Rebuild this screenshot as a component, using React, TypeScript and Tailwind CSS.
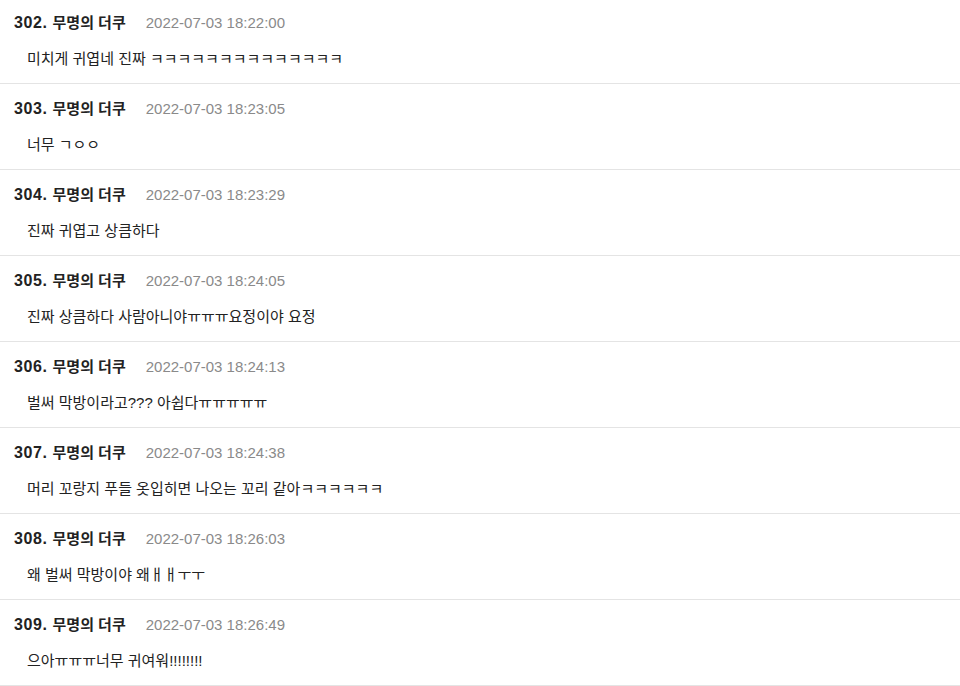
const comments = [
  { no: 302, at: '2022-07-03 18:22:00', text: '미치게 귀엽네 진짜 ㅋㅋㅋㅋㅋㅋㅋㅋㅋㅋㅋㅋㅋㅋ' },
  { no: 303, at: '2022-07-03 18:23:05', text: '너무 ㄱㅇㅇ' },
  { no: 304, at: '2022-07-03 18:23:29', text: '진짜 귀엽고 상큼하다' },
  { no: 305, at: '2022-07-03 18:24:05', text: '진짜 상큼하다 사람아니야ㅠㅠㅠ요정이야 요정' },
  { no: 306, at: '2022-07-03 18:24:13', text: '벌써 막방이라고??? 아쉽다ㅠㅠㅠㅠㅠ' },
  { no: 307, at: '2022-07-03 18:24:38', text: '머리 꼬랑지 푸들 옷입히면 나오는 꼬리 같아ㅋㅋㅋㅋㅋㅋ' },
  { no: 308, at: '2022-07-03 18:26:03', text: '왜 벌써 막방이야 왜ㅐㅐㅜㅜ' },
  { no: 309, at: '2022-07-03 18:26:49', text: '으아ㅠㅠㅠ너무 귀여워!!!!!!!!' },
]

export default function App() {
  return (
    <div className="w-[960px] h-[686px] overflow-hidden bg-white font-['Liberation_Sans','Noto_Sans_CJK_KR',sans-serif]">
      <div className="-mt-[2px]">
        {comments.map((c) => (
          <div key={c.no} className="h-[86px] border-b border-[#e4e4e4] pl-[14px] pt-[14px]">
            <div className="flex items-baseline leading-[22px]">
              <span className="text-[16px] tracking-[0.6px] font-bold text-[#222]">{c.no}.</span>
              <span className="ml-[5px] text-[15px] font-bold text-[#222]">무명의 더쿠</span>
              <span className="ml-[20px] text-[15px] text-[#8a8a8a]">{c.at}</span>
            </div>
            <div className="pl-[13px] mt-[14px] text-[15px] leading-[22px] text-[#222]">{c.text}</div>
          </div>
        ))}
      </div>
    </div>
  )
}
